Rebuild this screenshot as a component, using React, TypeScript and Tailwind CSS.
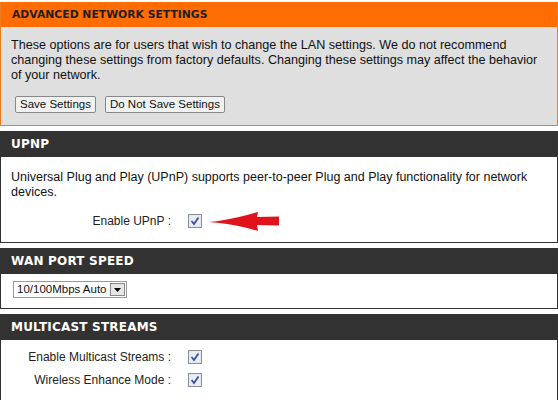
import React from "react";

const body = { fontFamily: '"Liberation Sans", Arial, sans-serif' };
const head = { fontFamily: '"DejaVu Sans", Verdana, sans-serif' };

function CheckBox() {
  return (
    <svg width="14" height="14" viewBox="0 0 14 14" className="shrink-0">
      <rect x="0.5" y="0.5" width="13" height="13" fill="#dfe3ec" stroke="#8a8f9a" />
      <rect x="1.5" y="1.5" width="11" height="11" fill="#e9edf4" />
      <path d="M3.5 7 L6 10 L10.5 3.5" fill="none" stroke="#3b4f9e" strokeWidth="1.8" />
    </svg>
  );
}

function RedArrow() {
  return (
    <svg width="70" height="20" viewBox="0 0 70 20" className="shrink-0">
      <path
        d="M0 10 L8 9.3 Q30 6 49 0 L48 5 L70 4.5 L70 13.5 L48 13 L49 19 Q30 13 8 10.7 Z"
        fill="#e0121b"
      />
    </svg>
  );
}

function DarkSection({ title, children }: { title: string; children: React.ReactNode }) {
  return (
    <div className="border border-[#333] bg-white">
      <div
        className="h-[25px] bg-[#323232] px-[10px] text-[12px] font-bold leading-[25px] tracking-[0.2px] text-white"
        style={head}
      >
        {title}
      </div>
      {children}
    </div>
  );
}

function Row({ label, arrow }: { label: string; arrow?: boolean }) {
  return (
    <div className="flex h-[23px] items-center">
      <div className="w-[172px] pr-[2px] text-right text-[12px] text-[#222]">{label}</div>
      <div className="ml-[15px]">
        <CheckBox />
      </div>
      {arrow && (
        <div className="ml-[7px] mt-[2px]">
          <RedArrow />
        </div>
      )}
    </div>
  );
}

export default function App() {
  return (
    <div className="flex h-[400px] w-[558px] flex-col gap-[5px] overflow-hidden bg-white pt-[2px]" style={body}>
      {/* Advanced network settings */}
      <div className="border border-t-0 border-[#f07a20] bg-[#dfdfdf]">
        <div
          className="h-[25px] bg-[#ff6c00] px-[11px] text-[10.8px] font-bold leading-[26px] text-[#1e1e1e]"
          style={head}
        >
          ADVANCED NETWORK SETTINGS
        </div>
        <div className="px-[10px] pb-[12px] pt-[11px]">
          <p className="text-[12.6px] leading-[15px] text-[#111]">
            These options are for users that wish to change the LAN settings. We do not recommend
            changing these settings from factory defaults. Changing these settings may affect the behavior
            of your network.
          </p>
          <div className="mt-[13px] flex gap-[9px] pl-[4px]">
            <button className="h-[17px] rounded-[2px] border border-[#888] bg-[#f1f1f1] px-[4px] text-[11.5px] leading-[15px] text-[#111]">
              Save Settings
            </button>
            <button className="h-[17px] rounded-[2px] border border-[#888] bg-[#f1f1f1] px-[4px] text-[11.5px] leading-[15px] text-[#111]">
              Do Not Save Settings
            </button>
          </div>
        </div>
      </div>

      {/* UPnP */}
      <DarkSection title="UPNP">
        <div className="px-[10px] pb-[10px] pt-[13px]">
          <p className="text-[12.5px] leading-[15px] text-[#111]">
            Universal Plug and Play (UPnP) supports peer-to-peer Plug and Play functionality for network
            devices.
          </p>
          <div className="-ml-[10px] mt-[9px]">
            <Row label="Enable UPnP :" arrow />
          </div>
        </div>
      </DarkSection>

      {/* WAN port speed */}
      <DarkSection title="WAN PORT SPEED">
        <div className="px-[12px] pb-[10px] pt-[7px]">
          <div className="flex h-[17px] w-[114px] items-center border border-[#999] bg-white">
            <span className="flex-1 whitespace-nowrap pl-[3px] text-[11.5px] leading-[15px] text-[#111]">
              10/100Mbps Auto
            </span>
            <span className="m-[1px] flex h-[13px] w-[15px] items-center justify-center border border-[#888] bg-[#e6e6e6]">
              <svg width="7" height="4" viewBox="0 0 7 4">
                <path d="M0 0 H7 L3.5 4 Z" fill="#000" />
              </svg>
            </span>
          </div>
        </div>
      </DarkSection>

      {/* Multicast streams */}
      <DarkSection title="MULTICAST STREAMS">
        <div className="pb-[20px] pt-[5px]">
          <Row label="Enable Multicast Streams :" />
          <Row label="Wireless Enhance Mode :" />
        </div>
      </DarkSection>
    </div>
  );
}
